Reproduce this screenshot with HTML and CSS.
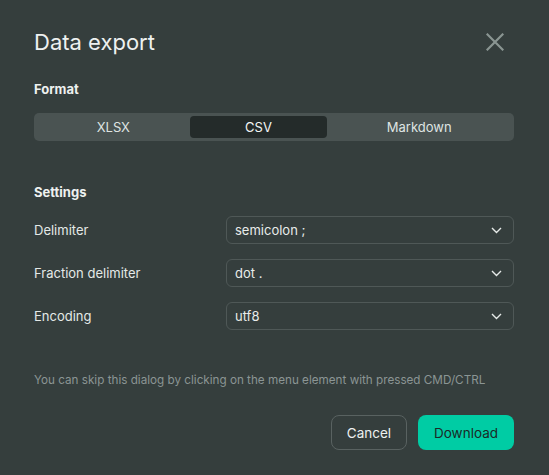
FILE: index.html
```html
<!DOCTYPE html>
<html lang="en">
<head>
<meta charset="utf-8">
<title>Data export</title>
<link rel="stylesheet" href="styles.css">
</head>
<body>
<div class="dialog">
  <div class="header">
    <h1 class="title">Data export</h1>
    <button class="close" aria-label="Close">
      <svg width="18" height="18" viewBox="0 0 18 18"><path d="M1.5 1.5L16.5 16.5M16.5 1.5L1.5 16.5" stroke="#8a9592" stroke-width="2.2" stroke-linecap="square" fill="none"/></svg>
    </button>
  </div>
  <h2 class="section">Format</h2>
  <div class="segment">
    <div class="seg-item">XLSX</div>
    <div class="seg-item active">CSV</div>
    <div class="seg-item">Markdown</div>
  </div>
  <h2 class="section settings">Settings</h2>
  <div class="rows">
    <div class="row">
      <span class="label">Delimiter</span>
      <div class="select"><span>semicolon ;</span><svg class="chev" width="11" height="7" viewBox="0 0 11 7"><path d="M1 1L5.5 5.5L10 1" stroke="#e6eae8" stroke-width="1.4" fill="none"/></svg></div>
    </div>
    <div class="row">
      <span class="label">Fraction delimiter</span>
      <div class="select"><span>dot .</span><svg class="chev" width="11" height="7" viewBox="0 0 11 7"><path d="M1 1L5.5 5.5L10 1" stroke="#e6eae8" stroke-width="1.4" fill="none"/></svg></div>
    </div>
    <div class="row">
      <span class="label">Encoding</span>
      <div class="select"><span>utf8</span><svg class="chev" width="11" height="7" viewBox="0 0 11 7"><path d="M1 1L5.5 5.5L10 1" stroke="#e6eae8" stroke-width="1.4" fill="none"/></svg></div>
    </div>
  </div>
  <p class="hint">You can skip this dialog by clicking on the menu element with pressed CMD/CTRL</p>
  <div class="actions">
    <button class="btn cancel">Cancel</button>
    <button class="btn download">Download</button>
  </div>
</div>
</body>
</html>
```
FILE: styles.css
```css
* { box-sizing: border-box; }
html, body {
  margin: 0;
  padding: 0;
  background: #353e3d;
  width: 549px;
  height: 475px;
  overflow: hidden;
}
body {
  font-family: Inter, "Noto Sans", sans-serif;
  color: #e4e9e7;
}
.dialog {
  padding: 26px 35px 0 34px;
}
.header {
  display: flex;
  align-items: center;
  justify-content: space-between;
  height: 32px;
}
.title {
  margin: 0;
  font-size: 22px;
  font-weight: 400;
  color: #eef1f0;
  letter-spacing: 0;
}
.close {
  background: none;
  border: 0;
  padding: 0;
  width: 18px;
  height: 18px;
  margin-right: 10px;
  display: flex;
}
.section {
  margin: 0;
  font-size: 13px;
  font-weight: 700;
  color: #eef1f0;
  line-height: 16px;
}
.header + .section { margin-top: 23px; }
.segment {
  margin-top: 16px;
  display: grid;
  grid-template-columns: 153fr 138fr 184fr;
  background: #4a5352;
  border-radius: 5px;
  padding: 3px;
  height: 28px;
}
.seg-item {
  display: flex;
  align-items: center;
  justify-content: center;
  font-size: 13px;
  color: #dfe4e2;
  border-radius: 4px;
}
.seg-item.active {
  background: #242b2a;
  color: #f2f5f4;
}
.settings { margin-top: 43px; }
.rows {
  margin-top: 16px;
  display: flex;
  flex-direction: column;
  gap: 15px;
}
.row {
  display: flex;
  align-items: center;
}
.label {
  width: 192px;
  font-size: 13px;
  color: #e4e9e7;
}
.select {
  flex: 1;
  height: 28px;
  border: 1px solid #4f5857;
  border-radius: 6px;
  display: flex;
  align-items: center;
  justify-content: space-between;
  padding: 0 11px 0 8px;
  font-size: 13px;
  color: #e8ecea;
}
.hint {
  margin: 43px 0 0;
  font-size: 11.7px;
  color: #8b9594;
}
.actions {
  margin-top: 28px;
  display: flex;
  justify-content: flex-end;
  gap: 11px;
}
.btn {
  height: 35px;
  border-radius: 8px;
  font-family: inherit;
  font-size: 13.5px;
  padding: 0;
}
.cancel {
  width: 76px;
  background: transparent;
  border: 1px solid #596261;
  color: #eef1f0;
}
.download {
  width: 96px;
  background: #00cca4;
  border: 0;
  color: #1b2a27;
}
```
